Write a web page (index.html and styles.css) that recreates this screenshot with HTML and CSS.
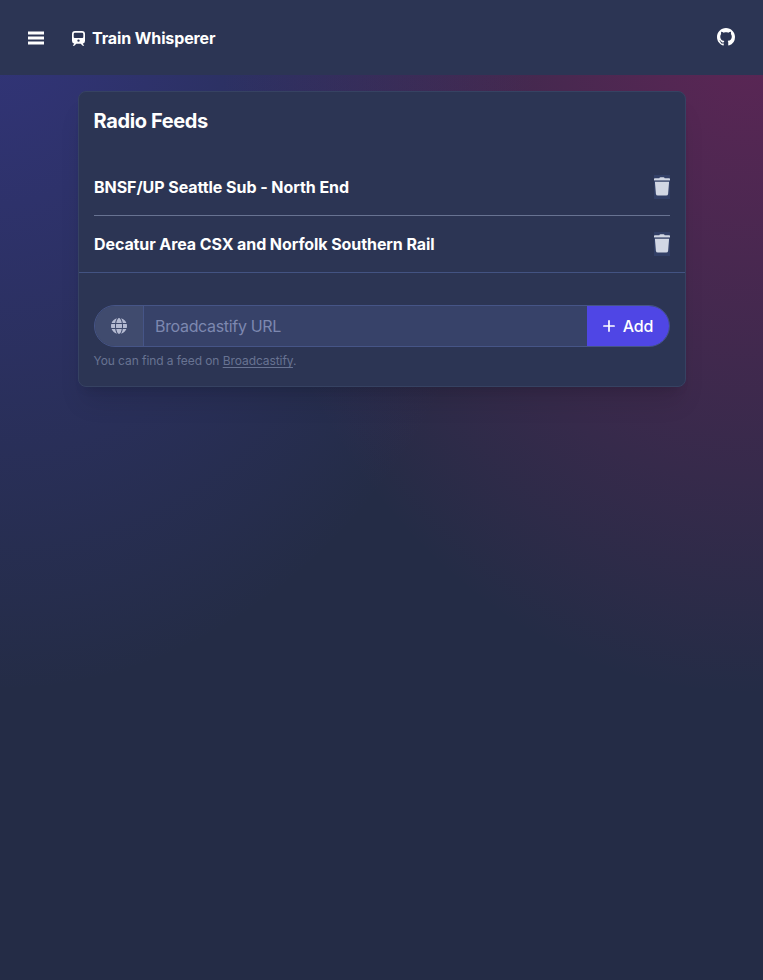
FILE: index.html
```html
<!DOCTYPE html>
<html lang="en">
<head>
<meta charset="utf-8">
<title>Train Whisperer</title>
<link rel="stylesheet" href="styles.css">
</head>
<body>
<header class="app-bar">
  <button class="menu" aria-label="Menu"><svg width="16" height="14" viewBox="0 0 16 14" fill="currentColor"><path d="M0 .4h16v3.100H0zM0 5.400h16v3.100H0zM0 10.400h16v3.100H0z"/></svg></button>
  <div class="brand">
    <svg width="13" height="15" viewBox="0 0 13 15" fill="currentColor" fill-rule="evenodd"><path d="M3 0h7q3 0 3 3v7q0 2.400-2.300 2.700L12 14.200q.4.600-.3.600h-1L8.700 12.800H4.300l-2 2h-1q-.7 0-.3-.6l1.300-1.500Q0 12.400 0 10V3q0-3 3-3zM3 1.700q-1.300 0-1.300 1.300v3q0 1 1 1h7.600q1 0 1-1V3q0-1.300-1.300-1.300zM6.500 8.400a1.200 1.200 0 1 0 0 2.400 1.200 1.200 0 1 0 0-2.400z"/></svg>
    <strong>Train Whisperer</strong>
  </div>
  <a class="github" href="#" aria-label="GitHub"><svg width="18" height="18" viewBox="0 0 16 16" fill="currentColor"><path d="M8 0C3.580 0 0 3.580 0 8c0 3.540 2.290 6.530 5.470 7.590.4.070.55-.17.55-.38 0-.19-.01-.82-.01-1.490-2.010.37-2.530-.49-2.690-.94-.09-.23-.48-.94-.82-1.130-.28-.15-.68-.52-.01-.53.63-.01 1.080.58 1.230.82.72 1.210 1.870.87 2.330.66.07-.52.28-.87.51-1.070-1.780-.2-3.640-.89-3.640-3.950 0-.87.31-1.590.82-2.150-.08-.2-.36-1.020.08-2.120 0 0 .67-.21 2.200.82.64-.18 1.320-.27 2-.27s1.360.09 2 .27c1.530-1.040 2.200-.82 2.200-.82.44 1.100.16 1.920.08 2.120.51.56.82 1.270.82 2.150 0 3.070-1.870 3.750-3.650 3.950.29.25.54.73.54 1.480 0 1.070-.01 1.930-.01 2.200 0 .21.15.46.55.38A8.010 8.010 0 0 0 16 8c0-4.420-3.580-8-8-8z"/></svg></a>
</header>
<main class="card">
  <h1 class="title">Radio Feeds</h1>
  <ul class="feeds">
    <li class="feed"><span>BNSF/UP Seattle Sub - North End</span>
      <button class="delete" aria-label="Delete"><svg width="16" height="19" viewBox="0 0 16 19" fill="currentColor"><path d="M5.300 1.200Q5.600.3 6.500.3h3q.9 0 1.200.9h4.500q.8 0 .8.8v.9H0V2q0-.8.8-.8zM.9 4.800h14.200l-1 12.100q-.2 1.700-1.900 1.700H3.800q-1.700 0-1.900-1.700z"/><path d="M0 2.900h16v.8H0z" opacity=".6"/></svg></button></li>
    <li class="feed"><span>Decatur Area CSX and Norfolk Southern Rail</span>
      <button class="delete" aria-label="Delete"><svg width="16" height="19" viewBox="0 0 16 19" fill="currentColor"><path d="M5.300 1.200Q5.600.3 6.500.3h3q.9 0 1.200.9h4.500q.8 0 .8.8v.9H0V2q0-.8.8-.8zM.9 4.800h14.200l-1 12.100q-.2 1.700-1.900 1.700H3.800q-1.700 0-1.900-1.700z"/><path d="M0 2.900h16v.8H0z" opacity=".6"/></svg></button></li>
  </ul>
  <form class="add-feed">
    <div class="input-group">
      <div class="shim"><svg width="16" height="16" viewBox="0 0 512 512" fill="currentColor"><path d="M352 256c0 22.200-1.200 43.600-3.300 64H163.300c-2.200-20.400-3.300-41.800-3.300-64s1.200-43.600 3.300-64H348.700c2.200 20.400 3.300 41.800 3.300 64zm28.800-64H503.900c5.300 20.500 8.100 41.900 8.100 64s-2.800 43.500-8.100 64H380.800c2.100-20.600 3.200-42 3.200-64s-1.100-43.400-3.200-64zm112.600-32H376.700c-10-63.900-29.800-117.400-55.300-151.600c78.300 20.700 142 77.500 171.900 151.600zm-149.100 0H167.700c6.100-36.400 15.500-68.600 27-94.700c10.500-23.600 22.200-40.700 33.500-51.500C239.400 3.200 248.700 0 256 0s16.600 3.200 27.800 13.800c11.300 10.800 23 27.900 33.500 51.500c11.600 26 20.900 58.200 27 94.700zm-209 0H18.600C48.600 85.900 112.200 29.100 190.600 8.400C165.100 42.600 145.300 96.100 135.300 160zM8.100 192H131.200c-2.100 20.600-3.200 42-3.200 64s1.100 43.400 3.200 64H8.100C2.800 299.500 0 278.100 0 256s2.800-43.500 8.100-64zM194.700 446.600c-11.600-26-20.900-58.200-27-94.600H344.300c-6.100 36.400-15.500 68.600-27 94.600c-10.500 23.600-22.200 40.700-33.500 51.500C272.600 508.800 263.300 512 256 512s-16.600-3.200-27.800-13.800c-11.300-10.800-23-27.900-33.500-51.500zM135.300 352c10 63.900 29.800 117.400 55.300 151.600C112.200 482.900 48.600 426.100 18.600 352H135.300zm358.100 0c-30 74.100-93.600 130.900-171.900 151.600c25.500-34.200 45.200-87.700 55.300-151.600H493.400z"/></svg></div>
      <input class="url" type="text" placeholder="Broadcastify URL">
      <button class="add" type="button"><svg width="12" height="12" viewBox="0 0 12 12" fill="none" stroke="currentColor" stroke-width="1.700" stroke-linecap="round"><path d="M6 .9v10.200M.9 6h10.200"/></svg><span>Add</span></button>
    </div>
    <p class="hint">You can find a feed on <a href="#">Broadcastify</a>.</p>
  </form>
</main>
</body>
</html>
```

FILE: styles.css
```css
* { box-sizing: border-box; margin: 0; padding: 0; }
body {
  min-height: 100vh;
  font: 16px/24px Inter, "Liberation Sans", sans-serif;
  color: #fff;
  background:
    radial-gradient(at 0% 0%, rgba(79, 70, 229, .33) 0, transparent 50%),
    radial-gradient(at 98% 1%, rgba(212, 25, 118, .33) 0, transparent 50%),
    #242c46;
}
button { border: 0; background: none; color: inherit; font: inherit; }
svg { display: block; }
.app-bar {
  display: flex;
  align-items: center;
  height: 75px;
  padding: 0 28px;
  background: #2c3554;
}
.menu { margin-top: 1px; }
.brand { display: flex; align-items: center; gap: 7px; margin-left: 28px; margin-top: 1px; }
.brand svg { margin-top: 1px; }
.brand strong { font-weight: 700; letter-spacing: -.11px; }
.github { margin-left: auto; margin-top: -1px; color: #fff; }
.card {
  width: 608px;
  height: 296px;
  margin: 16px 0 0 78px;
  border: 1px solid #364262;
  border-radius: 8px;
  background: #2c3554;
  box-shadow: 0 20px 25px -5px rgba(0, 0, 0, .1), 0 8px 10px -6px rgba(0, 0, 0, .1);
}
.title { padding: 15px 15px 0 14.5px; font-size: 20px; line-height: 28px; font-weight: 700; letter-spacing: -.37px; }
.feeds { margin-top: 24px; list-style: none; padding: 0 15px; border-bottom: 1px solid #435382; }
.feed { display: flex; justify-content: space-between; align-items: center; height: 56px; font-weight: 700; letter-spacing: -.06px; }
.feed + .feed { height: 57px; border-top: 1px solid #687392; letter-spacing: -.09px; }
.delete { display: flex; align-items: flex-start; width: 16px; height: 24px; padding-top: 2px; margin-top: -1px; color: #d2d7e4; background: #323f66; }
.add-feed { padding: 32px 15px 0; }
.input-group {
  display: grid;
  grid-template-columns: 49px 1fr 82px;
  height: 42px;
  overflow: hidden;
  border: 1px solid #465587;
  border-radius: 21px;
  background: #374269;
}
.shim { display: grid; place-items: center; padding-right: 1px; background: #404b6e; border-right: 1px solid #465587; color: #b5bbd2; }
.url { min-width: 0; border: 0; outline: 0; padding: 0 11px; background: transparent; color: #fff; font: inherit; letter-spacing: -.33px; }
.url::placeholder { color: #7d88b0; opacity: 1; }
.add { display: flex; align-items: center; justify-content: center; gap: 8px; background: #4f46e5; letter-spacing: -.2px; font-weight: 500; }
.hint { margin-top: 6px; margin-left: -.5px; font-size: 12px; line-height: 16px; color: #687392; letter-spacing: -.07px; }
.hint a { color: inherit; text-underline-offset: 2px; }
```
